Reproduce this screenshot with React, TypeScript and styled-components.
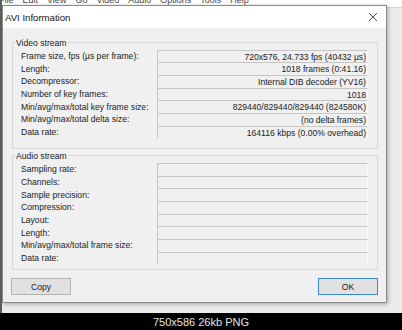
import React, { FC } from 'react';
import styled, { createGlobalStyle } from 'styled-components';

const GlobalStyle = createGlobalStyle`
  html, body {
    margin: 0;
    padding: 0;
    background: #000;
  }
  * {
    box-sizing: border-box;
  }
`;

const videoRows: [string, string][] = [
  ['Frame size, fps (µs per frame):', '720x576, 24.733 fps (40432 µs)'],
  ['Length:', '1018 frames (0:41.16)'],
  ['Decompressor:', 'Internal DIB decoder (YV16)'],
  ['Number of key frames:', '1018'],
  ['Min/avg/max/total key frame size:', '829440/829440/829440 (824580K)'],
  ['Min/avg/max/total delta size:', '(no delta frames)'],
  ['Data rate:', '164116 kbps (0.00% overhead)'],
];

const audioRows: [string, string][] = [
  ['Sampling rate:', ''],
  ['Channels:', ''],
  ['Sample precision:', ''],
  ['Compression:', ''],
  ['Layout:', ''],
  ['Length:', ''],
  ['Min/avg/max/total frame size:', ''],
  ['Data rate:', ''],
];

const menuItems = ['File', 'Edit', 'View', 'Go', 'Video', 'Audio', 'Options', 'Tools', 'Help'];

const StyledPage = styled.div`
  width: 402px;
  height: 330px;
  display: flex;
  flex-direction: column;
  background: #000;
  font-family: 'Liberation Sans', Arial, sans-serif;
`;

const StyledScreen = styled.div`
  position: relative;
  height: 313px;
  background: #ebebeb;
  border-left: 2px solid #5c5c5c;
  overflow: hidden;
`;

const StyledMenuBar = styled.div`
  height: 8px;
  background: #fff;
  border-bottom: 1px solid #d8d8d8;
  overflow: hidden;
  display: flex;
  gap: 9px;
  margin-left: -3px;
`;

const StyledMenuItem = styled.span`
  font-size: 9px;
  line-height: 10px;
  margin-top: -5px;
  color: #4a4a4a;
`;

const StyledDialog = styled.div`
  position: absolute;
  left: 0;
  top: 5px;
  width: 385px;
  height: 298px;
  border: 1px solid #8a8a8a;
  background: #f0f0f0;
  box-shadow: 1px 1px 4px rgba(0, 0, 0, 0.3);
  display: flex;
  flex-direction: column;
`;

const StyledTitleBar = styled.div`
  height: 22px;
  background: #fff;
  display: flex;
  align-items: center;
  justify-content: space-between;
  padding: 0 8px 0 2px;
  font-size: 9.6px;
  color: #111;
`;

const StyledBody = styled.div`
  flex: 1;
  display: flex;
  flex-direction: column;
  padding: 14px 8px 0 9px;
`;

const StyledGroup = styled.div<{ $bottom: number; $top: number }>`
  display: flex;
  flex-direction: column;
  border: 1px solid #d6d6d6;
  padding: 0 9px ${(p) => p.$bottom}px 8px;
  margin-top: ${(p) => p.$top}px;
`;

const StyledGroupTitle = styled.span`
  align-self: flex-start;
  margin: -5.5px 0 0 -6px;
  padding: 0 1px;
  height: 11px;
  line-height: 11px;
  font-size: 8.6px;
  color: #222;
  background: #f0f0f0;
`;

const StyledRows = styled.div`
  display: flex;
  flex-direction: column;
  margin-top: 1px;
`;

const StyledRow = styled.div`
  display: grid;
  grid-template-columns: 136px 1fr;
  height: 12.7px;
  font-size: 8.6px;
  line-height: 12px;
  color: #222;
`;

const StyledLabel = styled.span`
  white-space: nowrap;
  padding-top: 0.5px;
`;

const StyledValue = styled.span`
  border-top: 1px solid #c6c6c6;
  border-left: 1px solid #c6c6c6;
  border-right: 1px solid #f9f9f9;
  text-align: right;
  padding-right: 1px;
  white-space: nowrap;
  overflow: hidden;
`;

const StyledButtonRow = styled.div`
  display: flex;
  justify-content: space-between;
  margin-top: 8px;
`;

const StyledButton = styled.button<{ $default?: boolean }>`
  width: 60px;
  height: 17px;
  padding: 0;
  margin-left: ${(p) => (p.$default ? '0' : '-1px')};
  font-family: inherit;
  font-size: 8.6px;
  color: #1a1a1a;
  background: #e1e1e1;
  border: ${(p) => (p.$default ? '1.5px solid #3a86d6' : '1px solid #b4b4b4')};
  border-radius: 0;
`;

const StyledFooter = styled.div`
  height: 17px;
  display: flex;
  align-items: center;
  justify-content: center;
  font-size: 11px;
  color: #e4e4e4;
`;

const CloseIcon: FC = () => (
  <svg width="10" height="10" viewBox="0 0 10 10">
    <path d="M1 1 L9 9 M9 1 L1 9" stroke="#3a3a3a" strokeWidth="0.9" fill="none" />
  </svg>
);

interface GroupProps {
  title: string;
  rows: [string, string][];
  top: number;
  bottom: number;
}

const Group: FC<GroupProps> = ({ title, rows, top, bottom }) => (
  <StyledGroup $top={top} $bottom={bottom}>
    <StyledGroupTitle>{title}</StyledGroupTitle>
    <StyledRows>
      {rows.map(([label, value], i) => (
        <StyledRow key={i}>
          <StyledLabel>{label}</StyledLabel>
          <StyledValue>{value}</StyledValue>
        </StyledRow>
      ))}
    </StyledRows>
  </StyledGroup>
);

const App: FC = () => (
  <>
    <GlobalStyle />
    <StyledPage>
      <StyledScreen>
        <StyledMenuBar>
          {menuItems.map((m) => (
            <StyledMenuItem key={m}>{m}</StyledMenuItem>
          ))}
        </StyledMenuBar>
        <StyledDialog>
          <StyledTitleBar>
            <span>AVI Information</span>
            <CloseIcon />
          </StyledTitleBar>
          <StyledBody>
            <Group title="Video stream" rows={videoRows} top={0} bottom={10} />
            <Group title="Audio stream" rows={audioRows} top={6} bottom={5} />
            <StyledButtonRow>
              <StyledButton>Copy</StyledButton>
              <StyledButton $default>OK</StyledButton>
            </StyledButtonRow>
          </StyledBody>
        </StyledDialog>
      </StyledScreen>
      <StyledFooter>750x586 26kb PNG</StyledFooter>
    </StyledPage>
  </>
);

export default App;
